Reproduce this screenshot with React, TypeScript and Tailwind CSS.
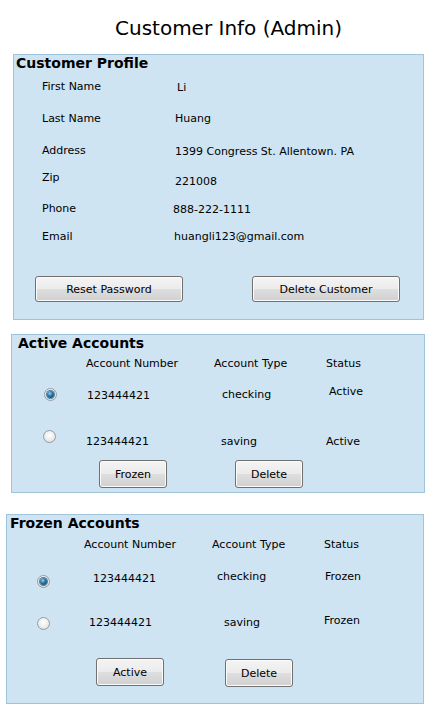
import React from 'react';

const Button = ({ label, className = '' }: { label: string, className?: string }) => (
    <button
        className={`shrink-0 flex items-center justify-center pt-[2px] rounded-[3px] border border-[#707070] bg-[linear-gradient(to_bottom,#f4f4f4_0%,#ebebeb_50%,#dedede_51%,#d0d0d0_100%)] shadow-[inset_0_0_0_1px_#fbfbfb] text-[11px] text-black ${className}`}
    >
        {label}
    </button>
);

const Radio = ({ checked = false, className = '' }: { checked?: boolean, className?: string }) => (
    <span
        className={`shrink-0 flex items-center justify-center w-[13px] h-[13px] rounded-full border border-[#9a9c9e] bg-[radial-gradient(circle_at_50%_40%,#ffffff_0%,#ececec_55%,#cfd0d1_100%)] ${className}`}
    >
        {checked && (
            <span className="w-[7px] h-[7px] rounded-full bg-[radial-gradient(circle_at_40%_35%,#8fd0f5_0%,#2a6f9c_45%,#0c3556_100%)] shadow-[0_0_0_1px_#4b7fa6]" />
        )}
    </span>
);

const Panel: React.FC<{ className?: string, children?: React.ReactNode }> = ({ className = '', children }) => (
    <div className={`flex flex-col border border-[#a0c4dc] bg-[#cee4f2] ${className}`}>
        {children}
    </div>
);

const profileRows = [
    { label: 'First Name', value: 'Li', rowClass: 'mt-[8px]', valueClass: 'mt-[1px] ml-[2px]' },
    { label: 'Last Name', value: 'Huang', rowClass: 'mt-[18px]', valueClass: '' },
    { label: 'Address', value: '1399 Congress St. Allentown. PA', rowClass: 'mt-[18px]', valueClass: 'mt-[1px]' },
    { label: 'Zip', value: '221008', rowClass: 'mt-[13px]', valueClass: 'mt-[4px]' },
    { label: 'Phone', value: '888-222-1111', rowClass: 'mt-[17px]', valueClass: 'mt-[1px] -ml-[2px]' },
    { label: 'Email', value: 'huangli123@gmail.com', rowClass: 'mt-[14px]', valueClass: '-ml-[1px]' },
];

export default function App() {
    return (
        <div className="w-[441px] min-h-[720px] bg-white text-black font-['DejaVu_Sans',Verdana,sans-serif] text-[11px] leading-[16px]">
            <h1 className="pt-[16px] pl-[115px] text-[20px] leading-[24px] font-normal">Customer Info (Admin)</h1>

            {/* customer profile */}
            <Panel className="mt-[14px] ml-[13px] w-[411px] h-[266px]">
                <h2 className="pl-[2px] text-[14px] leading-[16px] font-bold">Customer Profile</h2>
                {profileRows.map(row => (
                    <div key={row.label} className={`flex items-start h-[14px] ${row.rowClass}`}>
                        <span className="ml-[28px] w-[133px] shrink-0">{row.label}</span>
                        <span className={row.valueClass}>{row.value}</span>
                    </div>
                ))}
                <div className="flex mt-[33px] ml-[21px]">
                    <Button label="Reset Password" className="w-[148px] h-[26px]" />
                    <Button label="Delete Customer" className="ml-[69px] w-[148px] h-[26px]" />
                </div>
            </Panel>

            {/* active accounts */}
            <Panel className="mt-[14px] ml-[11px] w-[414px] h-[159px]">
                <h2 className="pl-[6px] text-[14px] leading-[16px] font-bold">Active Accounts</h2>
                <div className="grid grid-cols-[74px_128px_112px_1fr] mt-[5px] h-[14px]">
                    <span />
                    <span>Account Number</span>
                    <span>Account Type</span>
                    <span>Status</span>
                </div>
                <div className="grid grid-cols-[74px_128px_112px_1fr] items-start mt-[14px] h-[17px]">
                    <Radio checked className="mt-[4px] ml-[32px]" />
                    <span className="mt-[4px] ml-[1px]">123444421</span>
                    <span className="mt-[3px] ml-[8px]">checking</span>
                    <span className="ml-[3px]">Active</span>
                </div>
                <div className="grid grid-cols-[74px_128px_112px_1fr] items-start mt-[29px] h-[18px]">
                    <Radio className="ml-[31px]" />
                    <span className="mt-[4px]">123444421</span>
                    <span className="mt-[4px] ml-[7px]">saving</span>
                    <span className="mt-[4px]">Active</span>
                </div>
                <div className="flex mt-[12px] ml-[87px]">
                    <Button label="Frozen" className="w-[68px] h-[28px]" />
                    <Button label="Delete" className="ml-[68px] w-[68px] h-[28px]" />
                </div>
            </Panel>

            {/* frozen accounts */}
            <Panel className="mt-[21px] ml-[6px] w-[418px] h-[190px]">
                <h2 className="pl-[3px] text-[14px] leading-[16px] font-bold">Frozen Accounts</h2>
                <div className="grid grid-cols-[77px_128px_112px_1fr] mt-[6px] h-[14px]">
                    <span />
                    <span>Account Number</span>
                    <span>Account Type</span>
                    <span>Status</span>
                </div>
                <div className="grid grid-cols-[77px_128px_112px_1fr] items-start mt-[18px] h-[19px]">
                    <Radio checked className="mt-[6px] ml-[30px]" />
                    <span className="mt-[2px] ml-[9px]">123444421</span>
                    <span className="ml-[5px]">checking</span>
                    <span className="ml-[1px]">Frozen</span>
                </div>
                <div className="grid grid-cols-[77px_128px_112px_1fr] items-start mt-[25px] h-[17px]">
                    <Radio className="mt-[4px] ml-[30px]" />
                    <span className="mt-[2px] ml-[5px]">123444421</span>
                    <span className="mt-[2px] ml-[12px]">saving</span>
                    <span>Frozen</span>
                </div>
                <div className="flex items-start mt-[28px] ml-[89px]">
                    <Button label="Active" className="w-[68px] h-[28px]" />
                    <Button label="Delete" className="mt-[1px] ml-[61px] w-[68px] h-[28px]" />
                </div>
            </Panel>
        </div>
    );
}
